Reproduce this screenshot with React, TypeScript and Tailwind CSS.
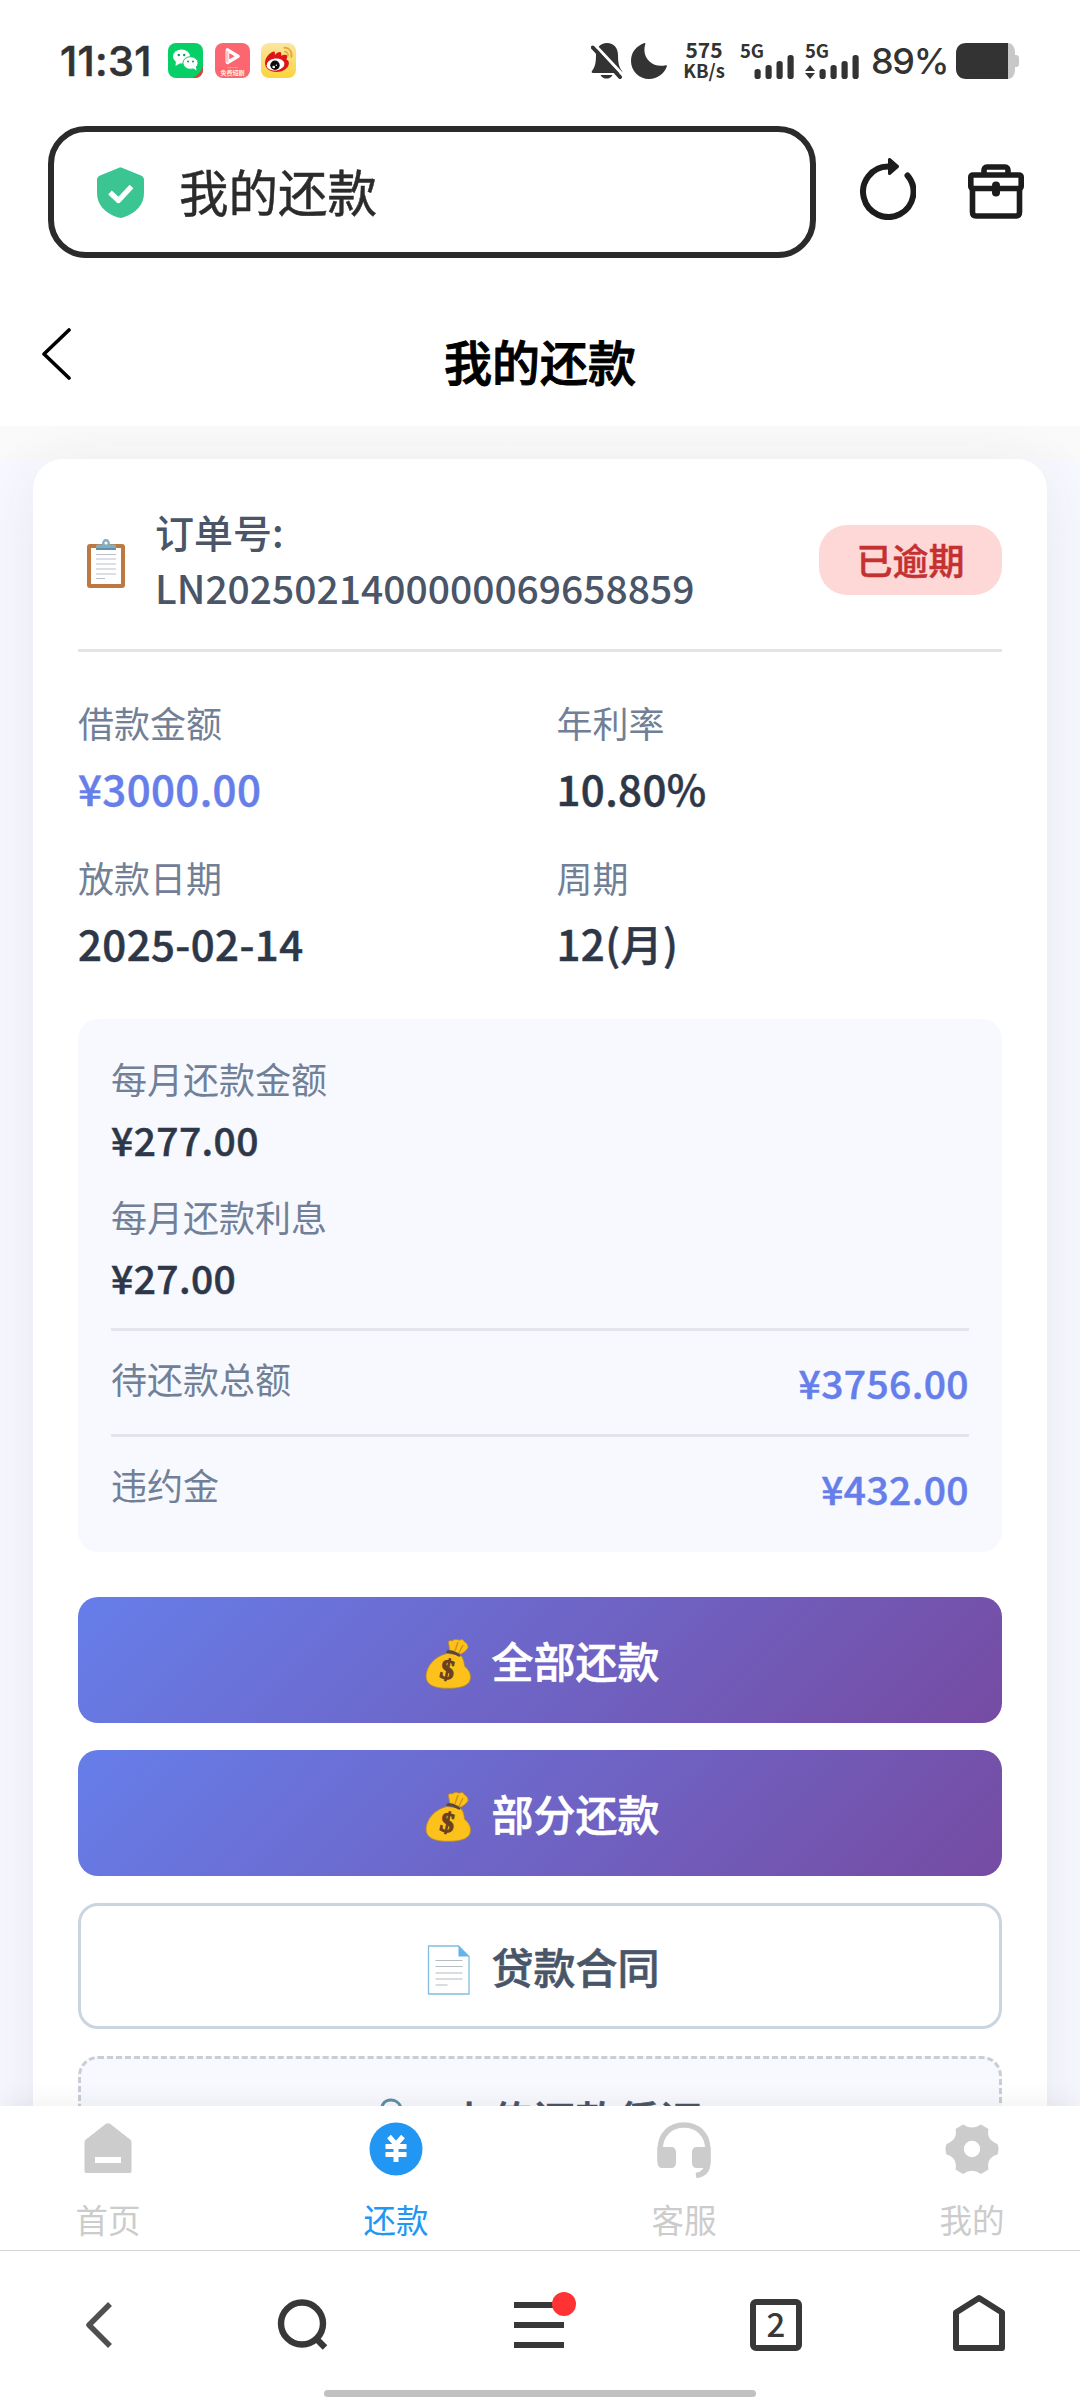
import type { ReactNode } from 'react';
import clsx from 'clsx';

const loanInfo = [
    { label: '借款金额', value: '¥3000.00', accent: true },
    { label: '年利率', value: '10.80%' },
    { label: '放款日期', value: '2025-02-14' },
    { label: '周期', value: '12(月)' },
];

const monthly = [
    { label: '每月还款金额', value: '¥277.00' },
    { label: '每月还款利息', value: '¥27.00' },
];

const totals = [
    { label: '待还款总额', value: '¥3756.00' },
    { label: '违约金', value: '¥432.00' },
];

/* ---------- Status bar ---------- */

function WechatIcon() {
    return (
        <svg className="w-[35px] h-[35px]" viewBox="0 0 35 35">
            <defs>
                <clipPath id="wx"><rect width="35" height="35" rx="8" /></clipPath>
            </defs>
            <g clipPath="url(#wx)">
                <rect width="35" height="35" fill="#06cf68" />
                <path d="M35 23v12H24c5-2 9-6 11-12z" fill="#d8443c" />
                <ellipse cx="13.5" cy="13.5" rx="8.5" ry="7" fill="#fff" />
                <path d="M8 18l-.5 5 5-3z" fill="#fff" />
                <ellipse cx="22.5" cy="20" rx="7.6" ry="6.3" fill="#fff" stroke="#06cf68" strokeWidth="1" />
                <path d="M25 25l3.500 2.500-.8-4.500z" fill="#fff" />
                <circle cx="10.800" cy="12" r="1.200" fill="#0b9d52" />
                <circle cx="16.200" cy="12" r="1.200" fill="#0b9d52" />
                <circle cx="20" cy="18.500" r="1" fill="#0b9d52" />
                <circle cx="25" cy="18.500" r="1" fill="#0b9d52" />
            </g>
        </svg>
    );
}

function VideoIcon() {
    return (
        <svg className="w-[35px] h-[35px]" viewBox="0 0 35 35">
            <rect width="35" height="35" rx="8" fill="#fb6670" />
            <path d="M12.500 7v12.500l10.500-6.300z" fill="none" stroke="#fff" strokeWidth="3.600" strokeLinejoin="round" />
            <path d="M12 8v11.500" stroke="#fdc3c7" strokeWidth="3" />
            <path d="M12 24.500h11" stroke="#fdb5b9" strokeWidth=".6" />
            <text x="17.500" y="32" fontSize="6" fontWeight="700" fill="#fff3d8" textAnchor="middle">免费短剧</text>
        </svg>
    );
}

function WeiboIcon() {
    return (
        <svg className="w-[35px] h-[35px]" viewBox="0 0 35 35">
            <defs>
                <linearGradient id="wb" x1="0" y1="0" x2="0" y2="1">
                    <stop offset="0" stopColor="#fbe6a4" />
                    <stop offset="1" stopColor="#fbd33a" />
                </linearGradient>
            </defs>
            <rect width="35" height="35" rx="8" fill="url(#wb)" />
            <path d="M4 20c0-5 4-10 8.500-11.500 2 0 1.500 2.500 1.300 3.500C16 9.500 19 8 20 9.500c.6 1 .2 2.300 0 3.200 2.500-1 5.600-1.700 6.200.3.400 1.300-.5 2.500-.8 3.400 2 .8 2.800 2.200 2.400 4.600-.8 4.500-6 8-12.500 8C9 29 4 25.500 4 20z" fill="#dd1519" />
            <ellipse cx="14.500" cy="21.500" rx="9" ry="6" transform="rotate(-8 14.500 21.500)" fill="#fff" />
            <circle cx="14" cy="22.300" r="4.700" fill="#0a0a0a" />
            <circle cx="12.700" cy="24" r="1.300" fill="#fff" />
            <circle cx="15.300" cy="22.300" r=".7" fill="#fff" />
            <path d="M23.500 4.800c4.500-.5 8 4 6.800 9.200" fill="none" stroke="#e7a93c" strokeWidth="1.900" strokeLinecap="round" />
            <path d="M23.800 8.600c2-.1 3.500 1.700 3.100 4" fill="none" stroke="#e7a93c" strokeWidth="1.700" strokeLinecap="round" />
        </svg>
    );
}

function Signal({ arrows = false }: { arrows?: boolean }) {
    return (
        <div className="relative w-[54px] h-9">
            <span className="absolute left-0 -top-1 text-[18.500px] leading-[22px] font-bold tracking-[-0.2px]">5G</span>
            <svg className="absolute inset-0 w-[54px] h-9" viewBox="0 0 54 36" fill="#333">
                {arrows && <path d="M5 22l5 6H0zM5 36l-5-6h10z" />}
                <rect x="14.500" y="26" width="6.200" height="10" rx="2.800" />
                <rect x="25.500" y="22" width="6.200" height="14" rx="2.800" />
                <rect x="36.500" y="18" width="6.200" height="18" rx="2.800" />
                <rect x="47.500" y="12" width="6.200" height="24" rx="2.800" />
            </svg>
        </div>
    );
}

function StatusBar() {
    return (
        <div className="h-[126px] pt-[43px] pl-[60px] pr-[61px] flex items-start text-[#333]">
            <div className="w-[108px] h-9 text-[41.500px] leading-9 font-medium tracking-[0.3px] font-['Inter'] [-webkit-text-stroke:0.6px_#333]">11:31</div>
            <div className="flex gap-[11.500px]">
                <WechatIcon />
                <VideoIcon />
                <WeiboIcon />
            </div>

            <div className="ml-auto flex items-start">
                <svg className="w-8 h-9" viewBox="0 0 32 36">
                    <path d="M16 0c7 0 11 5 11 12 0 8 1 12 4 16 .8 1.200.2 2-1 2H2c-1.200 0-1.800-.8-1-2 3-4 4-8 4-16C5 5 9 0 16 0z" fill="#333" />
                    <path d="M9.500 32h12c-1.500 2.600-3.500 3.600-6 3.600S11 34.600 9.500 32z" fill="#333" />
                    <path d="M4 2l27 29" stroke="#fff" strokeWidth="3" />
                    <path d="M1.800 4.500L29 34" stroke="#333" strokeWidth="4" strokeLinecap="round" />
                </svg>
                <svg className="w-9 h-9 ml-2" viewBox="0 0 36 36">
                    <path d="M13.500 0C5 3 0 9.500 0 18c0 10 8 18 18 18 8.500 0 15.500-5.500 18-13 0-.8-.7-1-1.300-.8C22 25.500 10 15 14.300 1c.2-.7-.2-1.200-.8-1z" fill="#333" />
                </svg>
                <div className="ml-[14px] -mt-[5px] w-[46px] text-center font-bold">
                    <div className="text-[21px] leading-[23px] whitespace-nowrap">575</div>
                    <div className="text-[18.500px] leading-[18px] whitespace-nowrap">KB/s</div>
                </div>
                <div className="ml-[13px] flex gap-[11px]">
                    <Signal />
                    <Signal arrows />
                </div>
                <div className="ml-[12px] w-[85px] text-[36px] leading-9 font-medium tracking-[-1.300px] font-['Inter']">89%</div>
                <svg className="w-[63px] h-9" viewBox="0 0 63 36">
                    <path d="M50 0h2c4 0 7 4 7 9v3h1c2 0 3 1 3 3v6c0 2-1 3-3 3h-1v3c0 5-3 9-7 9h-2z" fill="#c8c8c8" />
                    <path d="M10 0h42v36H10C4 36 0 32 0 26V10C0 4 4 0 10 0z" fill="#333" />
                </svg>
            </div>
        </div>
    );
}

/* ---------- Browser chrome ---------- */

function AddressBar() {
    return (
        <div className="flex items-center h-[132px] pl-12 pr-14">
            <div className="w-[768px] h-[132px] shrink-0 rounded-[38px] border-[6px] border-[#2b2b2b] flex items-center pl-[43px]">
                <svg className="w-[47px] h-[51px]" viewBox="0 0 47 51">
                    <path d="M21.500 1c1.300-.6 2.700-.6 4 0L44 8.500c2 .8 3 2.200 3 4.500v13c0 12-8 20-21 24.500-1.700.6-3.300.6-5 0C8 46 0 38 0 26V13c0-2.300 1-3.700 3-4.500z" fill="#3bc593" />
                    <path d="M13 25.500l8.500 8 13-14" fill="none" stroke="#fff" strokeWidth="5.200" strokeLinecap="butt" strokeLinejoin="round" />
                </svg>
                <span className="ml-[35px] -mt-0.5 text-[49.500px] leading-[70px] text-[#2b2b2b] [-webkit-text-stroke:0.5px_#2b2b2b]">我的还款</span>
            </div>
            <svg className="w-14 h-[62px] ml-[44px] -mt-1.5" viewBox="0 0 56 62">
                <path d="M47.500 17.500A25.200 25.200 0 1 1 28 8.600" fill="none" stroke="#1c1c1c" strokeWidth="6" strokeLinecap="round" />
                <path d="M29.500 1.500v14l8-7z" fill="#1c1c1c" stroke="#1c1c1c" strokeWidth="3" strokeLinejoin="round" />
            </svg>
            <svg className="w-14 h-[56px] ml-auto" viewBox="0 0 56 56" fill="none" stroke="#1c1c1c" strokeWidth="5.600" strokeLinejoin="round">
                <path d="M16 11V6.500c0-2 1-3.500 3-3.500h18c2 0 3 1.500 3 3.500V11" />
                <rect x="2.800" y="11" width="50.400" height="13.500" rx="2" />
                <path d="M4.500 25v23c0 2.500 1 4 3.500 4h40c2.500 0 3.500-1.500 3.500-4V25" />
                <path d="M28 21.500v7" strokeWidth="8" strokeLinecap="round" />
            </svg>
        </div>
    );
}

function PageHeader() {
    return (
        <header className="h-[168px] flex items-center justify-between px-[41px] bg-white">
            <svg className="w-[30px] h-[52px] mt-[23px]" viewBox="0 0 30 52">
                <path d="M28 2L3 26l25 24" fill="none" stroke="#000" strokeWidth="3.600" strokeLinecap="round" strokeLinejoin="round" />
            </svg>
            <h1 className="mt-[35px] text-[48px] leading-[60px] font-medium text-black [-webkit-text-stroke:1px_#000]">我的还款</h1>
            <div className="w-[30px]" />
        </header>
    );
}

/* ---------- Emoji drawings ---------- */

function ClipboardIcon() {
    return (
        <svg className="w-[38px] h-[50px]" viewBox="0 0 38 50">
            <rect y="5" width="38" height="44" rx="3" fill="#bf7840" />
            <rect x="4" y="9" width="30" height="36" fill="#fff" />
            <path d="M9 15.500h20M9 20h20M9 25h20M9 30h20M9 35h20M9 39.500h9" stroke="#b9c0c8" strokeWidth="1" />
            <path d="M9 11V7.500C9 6 10 5.500 11.500 5.500H15C15 2 16.500 0 19 0s4 2 4 5.500h3.500c1.500 0 2.500.5 2.500 2V11z" fill="#82aec0" />
            <circle cx="19" cy="4" r="1.600" fill="#fff" />
            <path d="M9 9h20v2H9z" fill="#5f91a8" />
        </svg>
    );
}

function MoneyBagIcon() {
    return (
        <svg className="w-[52px] h-[50px]" viewBox="0 0 52 50">
            <path d="M28 12L26.500 4c-.3-2 1.500-3 3.500-2 2-2 5-2 7.500-.8 2-1.200 4-.7 4.500 1.300 2 1 3.500 2.500 4 5 .3 2.500-3.500 5.500-7 7.500z" fill="#fcc21b" stroke="#c78a15" strokeWidth=".8" />
            <path d="M36 3l-3 9M41 6l-4 8" stroke="#d39518" strokeWidth="1.600" />
            <path d="M25 14.500C14 17 4.500 26 4 37c0 9 8 12.300 22 12.300 15 0 22.500-3.300 22.500-11.300 0-5-3-8-6-11-.5-5-1.500-9-4.500-11z" fill="#fcc21b" stroke="#b98a2c" strokeWidth=".8" />
            <path d="M25 11.500c5-1 10 1 13.500 5-.5 1.500-1 1.500-2 1-4-2.500-8-3.500-12.500-3.500z" fill="#5b4639" />
            <text x="25.500" y="40" fontSize="28" fontWeight="700" textAnchor="middle" fill="#6b3f21" stroke="#6b3f21" strokeWidth="1.100" transform="rotate(12 25.500 31)" fontFamily="Liberation Serif">$</text>
        </svg>
    );
}

function DocumentIcon() {
    return (
        <svg className="w-[52px] h-[50px]" viewBox="0 0 52 50">
            <path d="M6.500 1h30L47 11.500V49H6.500z" fill="#fff" stroke="#82bddd" strokeWidth="1.300" />
            <path d="M36.500 1L47 11.500H36.500z" fill="#62b5ea" />
            <path d="M13.500 15.500h27M13.500 21.500h27M13.500 28h27M13.500 34h27M13.500 40h12" stroke="#b5bcc2" strokeWidth="1.200" />
        </svg>
    );
}

function PaperclipIcon() {
    return (
        <svg className="w-[52px] h-[50px]" viewBox="0 0 52 50">
            <path d="M2.500 18c-3-11 2-16 8.500-16s9 4 11 10l9 25c2 8-9 11-12 3L12 22" fill="none" stroke="#5f8fa3" strokeWidth="3" />
        </svg>
    );
}

/* ---------- Loan card ---------- */

type ActionProps = { icon: ReactNode; label: string; className: string };

function ActionButton({ icon, label, className }: ActionProps) {
    return (
        <button className={clsx('h-[126px] w-full shrink-0 rounded-[20px] flex items-center justify-center gap-[17px] pl-0.5 text-[42px] font-medium', className)}>
            <span className="mt-2">{icon}</span>
            <span className="leading-[60px] -mt-px [-webkit-text-stroke:0.6px_currentColor]">{label}</span>
        </button>
    );
}

function LoanCard() {
    return (
        <section className="mx-[33px] mt-[33px] h-[1800px] rounded-[30px] bg-white px-[45px] shadow-[0_12px_60px_rgba(60,50,90,0.09)]">
            <div className="flex items-center justify-between pt-[44px] pb-[34px] border-b-[3px] border-[#e2e6ea]">
                <div className="flex items-center h-[112px]">
                    <span className="ml-[9px] mt-2.5"><ClipboardIcon /></span>
                    <div className="ml-[30px] text-[39px] leading-[56px] font-medium text-[#4a5568]">
                        <div>订单号:</div>
                        <div>LN2025021400000069658859</div>
                    </div>
                </div>
                <div className="mt-0.5 w-[183px] h-[70px] rounded-[28px] bg-[#fed7d7] flex items-center justify-center text-[36px] leading-[60px] pb-0.5 font-medium text-[#c53030] [-webkit-text-stroke:0.5px_#c53030]">
                    已逾期
                </div>
            </div>

            <div className="grid grid-cols-2 gap-x-[33px] gap-y-[31px] pt-[43px]">
                {loanInfo.map((item) => (
                    <div key={item.label}>
                        <div className="text-[36px] leading-[54px] text-[#718096]">{item.label}</div>
                        <div
                            className={clsx(
                                'mt-2 text-[42px] leading-[62px] font-medium tracking-[0.4px] [-webkit-text-stroke:0.5px_currentColor]',
                                item.accent ? 'text-[#667eea]' : 'text-[#2d3748]'
                            )}
                        >
                            {item.value}
                        </div>
                    </div>
                ))}
            </div>

            <div className="mt-[45px] h-[533px] rounded-[20px] bg-[#f7f9ff] px-[33px] pt-8">
                <div className="flex flex-col gap-[21px] pb-[22px]">
                    {monthly.map((item) => (
                        <div key={item.label}>
                            <div className="text-[36px] leading-[54px] text-[#718096]">{item.label}</div>
                            <div className="mt-[5px] text-[39px] leading-[58px] font-medium tracking-[0.4px] text-[#2d3748] [-webkit-text-stroke:0.5px_currentColor]">{item.value}</div>
                        </div>
                    ))}
                </div>
                {totals.map((item) => (
                    <div key={item.label} className="h-[106px] border-t-[3px] border-[#e2e6ec] flex items-center justify-between pb-0.5">
                        <div className="pb-2 text-[36px] leading-[54px] text-[#718096]">{item.label}</div>
                        <div className="text-[39px] leading-[58px] font-medium tracking-[0.4px] text-[#667eea] [-webkit-text-stroke:0.5px_currentColor]">{item.value}</div>
                    </div>
                ))}
            </div>

            <div className="mt-[45px] flex flex-col gap-[27px]">
                <ActionButton icon={<MoneyBagIcon />} label="全部还款" className="text-white bg-[linear-gradient(135deg,#667eea_0%,#764ba2_100%)]" />
                <ActionButton icon={<MoneyBagIcon />} label="部分还款" className="text-white bg-[linear-gradient(135deg,#667eea_0%,#764ba2_100%)]" />
                <ActionButton icon={<DocumentIcon />} label="贷款合同" className="text-[#4a5568] bg-white border-[3px] border-[#cbd5e0]" />
                <ActionButton icon={<PaperclipIcon />} label="上传还款凭证" className="text-[#4a5568] bg-[#f7f9ff] border-[3px] border-dashed border-[#c9cdd5]" />
            </div>
        </section>
    );
}

/* ---------- Bottom bars ---------- */

const tabs = [
    {
        label: '首页',
        icon: (
            <svg className="w-[54px] h-[56px]" viewBox="0 0 54 56">
                <path d="M25 1.800c1.300-.9 2.700-.9 4 0L48.500 17c1.400 1 2 2 2 3.500V49c0 1.500-.7 2-2 2h-43c-1.300 0-2-.5-2-2V20.500c0-1.500.6-2.500 2-3.500z" fill="#ccc" />
                <path d="M14 35h26v6H14z" fill="#fff" />
            </svg>
        ),
    },
    {
        label: '还款',
        active: true,
        icon: (
            <svg className="w-[54px] h-[56px]" viewBox="0 0 54 56">
                <circle cx="27" cy="27" r="26.500" fill="#2196f3" />
                <path d="M20 14.500l7 8 7-8M16.500 24.500h21M16.500 32.500h21M27 22v18" fill="none" stroke="#fff" strokeWidth="5" />
            </svg>
        ),
    },
    {
        label: '客服',
        icon: (
            <svg className="w-[54px] h-[56px]" viewBox="0 0 54 56">
                <path d="M3.200 40V27C3.200 13 13 3 27 3s23.800 10 23.800 24v13c0 8-4 12.500-11.800 13.500" fill="none" stroke="#ccc" strokeWidth="5.500" />
                <path d="M.5 25h13c4 0 5.500 2 5.500 5.500V40c0 4-1.500 6-5.500 6H6c-4 0-5.500-2-5.500-6zM53.500 25h-13c-4 0-5.500 2-5.500 5.500V40c0 4 1.500 6 5.500 6h7c4 0 6-2 6-6z" fill="#ccc" />
            </svg>
        ),
    },
    {
        label: '我的',
        icon: (
            <svg className="w-[54px] h-[56px]" viewBox="0 0 54 56">
                <path d="M18 2.500Q27 8.500 36 2.500L43.500 7C42 14 44.500 19 52.500 22Q54.500 27 52.500 32.500C44.500 35 42 40 43.500 47.500L36 52Q27 45.500 18 52L10.500 47.500C12 40 9.500 35 1.500 32.500Q-.5 27 1.500 22C9.500 19 12 14 10.500 7z" fill="#ccc" />
                <circle cx="27" cy="27" r="8.200" fill="#fff" />
            </svg>
        ),
    },
];

function TabBar() {
    return (
        <nav className="relative h-[144px] bg-white px-[44px] flex justify-between shadow-[0_-4px_24px_rgba(0,0,0,0.06)]">
            {tabs.map((tab) => (
                <div key={tab.label} className="w-32 pt-4 flex flex-col items-center">
                    {tab.icon}
                    <span className={clsx('mt-[17px] text-[32.500px] leading-[48px]', tab.active ? 'text-[#2196f3]' : 'text-[#ccc]')}>
                        {tab.label}
                    </span>
                </div>
            ))}
        </nav>
    );
}

function BrowserNav() {
    return (
        <div className="relative h-[150px] bg-white border-t border-[#d6d6d6] flex flex-col justify-between items-center pb-[3px]">
            <div className="w-full pl-[84px] pr-[75px] pt-[42px] flex items-start">
                <svg className="w-[30px] h-[56px]" viewBox="0 0 30 56">
                    <path d="M26 11L5 32l21 21" fill="none" stroke="#505050" strokeWidth="5.500" strokeLinejoin="round" />
                </svg>
                <svg className="w-[52px] h-[60px] ml-[163px]" viewBox="0 0 52 60">
                    <circle cx="25" cy="30.500" r="21" fill="none" stroke="#383838" strokeWidth="6.400" />
                    <path d="M39.500 46l8.500 8.500" stroke="#383838" strokeWidth="6.400" />
                </svg>
                <div className="relative ml-[185px] mt-[9px] w-[50px] h-[46px] flex flex-col justify-between">
                    <div className="h-1.5 bg-[#383838]" />
                    <div className="h-1.5 bg-[#383838]" />
                    <div className="h-1.5 bg-[#383838]" />
                    <div className="absolute left-[38px] -top-[10px] size-6 rounded-full bg-[#ff3333]" />
                </div>
                <div className="ml-[186px] mt-1.5 size-[52px] rounded-[6px] border-[6px] border-[#383838] flex items-center justify-center text-[33px] leading-[40px] font-medium text-[#383838] pb-1">
                    2
                </div>
                <svg className="w-[52px] h-[58px] ml-auto" viewBox="0 0 52 58">
                    <path d="M3 19.500L26 5l23 14.500V55H3z" fill="none" stroke="#383838" strokeWidth="6" strokeLinejoin="round" />
                </svg>
            </div>
            <div className="w-[432px] h-[7px] rounded-full bg-[#c1c1c1]" />
        </div>
    );
}

export default function App() {
    return (
        <div className="w-[1080px] h-[2400px] overflow-hidden bg-white font-['Noto_Sans_CJK_SC',sans-serif]">
            <StatusBar />
            <AddressBar />
            <PageHeader />
            <main className="h-[1680px] overflow-hidden bg-[linear-gradient(180deg,#fafafa_0,#f9f9f9_33px,#f8f9ff_34px,#f8f9ff_100%)]">
                <LoanCard />
            </main>
            <TabBar />
            <BrowserNav />
        </div>
    );
}
